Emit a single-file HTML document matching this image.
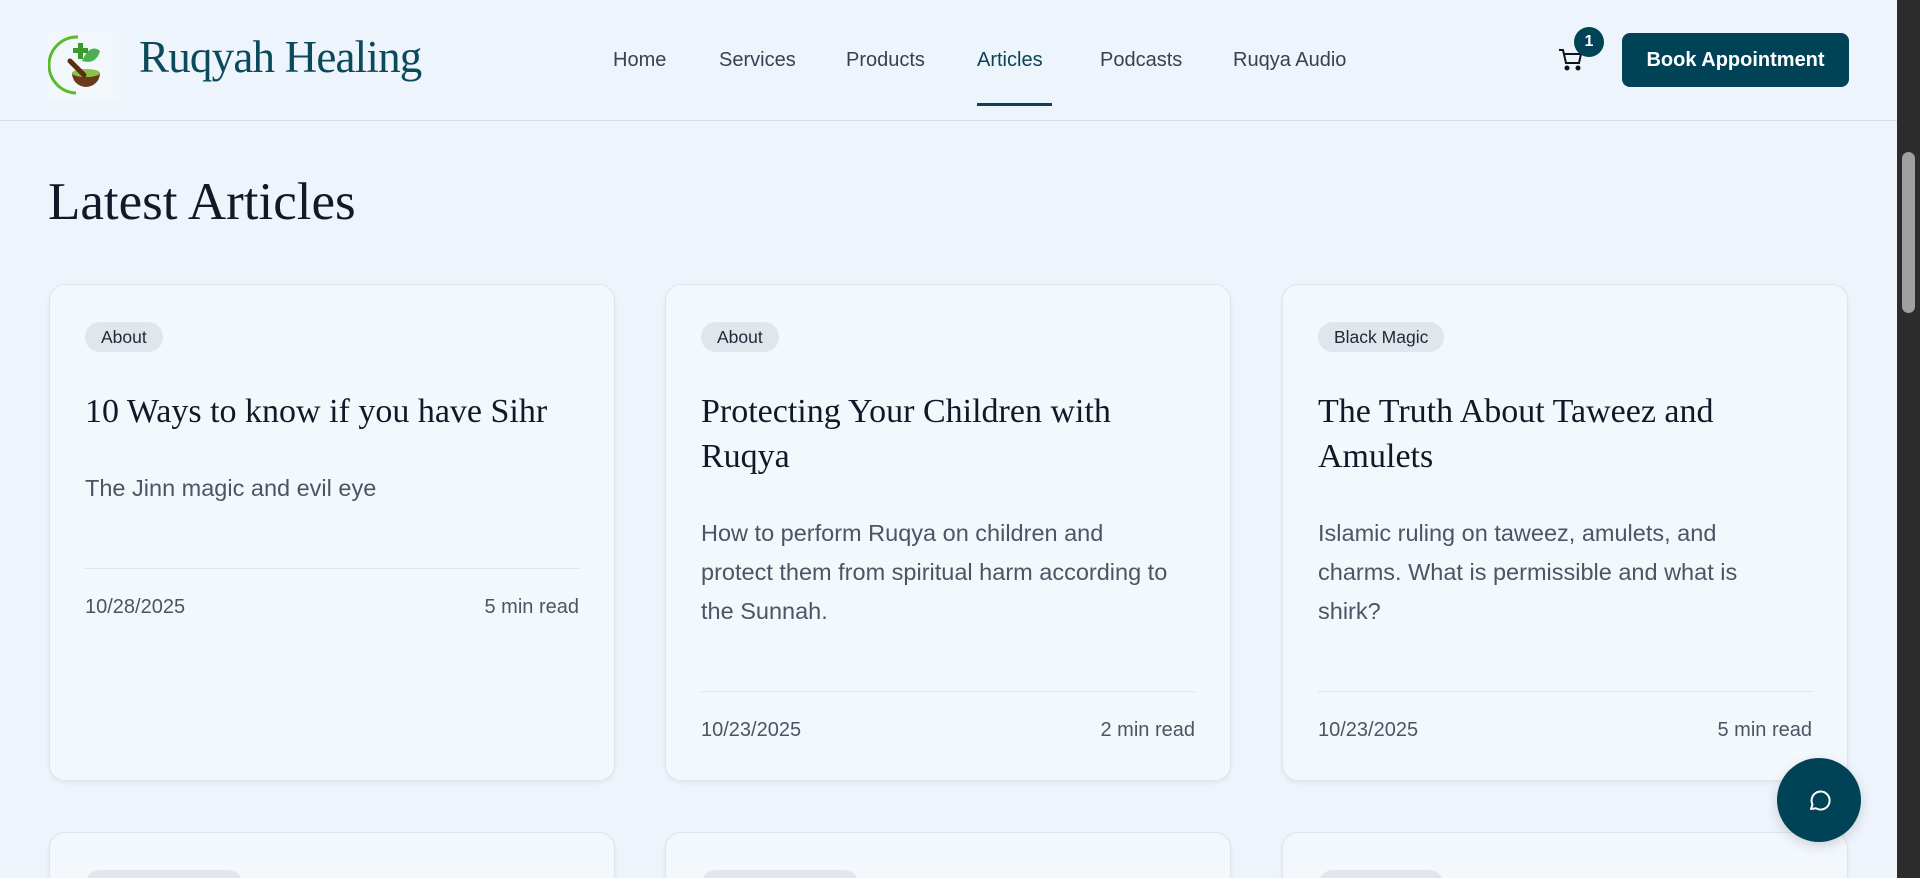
<!DOCTYPE html>
<html><head><meta charset="utf-8"><style>
*{box-sizing:border-box;margin:0;padding:0}
html,body{width:1920px;height:878px;overflow:hidden}
body{background:#eef4fb;font-family:"Liberation Sans",sans-serif;position:relative}
.hdr{position:absolute;left:0;top:0;width:1897px;height:121px;border-bottom:1.5px solid #d6dce6;background:#eef4fb}
.logo{position:absolute;left:48px;top:31px;width:71px;height:71px;background:#f2f7fb}
.brand{position:absolute;left:139px;top:31px;font-family:"Liberation Serif",serif;font-size:45px;color:#0b4a5a;letter-spacing:-0.8px}
.nav a{position:absolute;top:49px;font-size:20px;color:#374151;text-decoration:none}
.nav a.act{color:#0b4255}
.ul{position:absolute;left:977px;top:103px;width:75px;height:3px;background:#0b4255}
.btn{position:absolute;left:1622px;top:33px;width:227px;height:54px;background:#004357;border-radius:8px;color:#fff;font-size:20px;font-weight:bold;text-align:center;line-height:54px}
.badge{position:absolute;left:1574px;top:27px;width:30px;height:30px;border-radius:50%;background:#004357;color:#fff;font-size:16px;font-weight:bold;text-align:center;line-height:30px}
h1{position:absolute;left:48px;top:172px;font-family:"Liberation Serif",serif;font-weight:normal;font-size:53px;color:#111827}
.card{position:absolute;width:566px;background:#f3f8fd;border:1px solid #e0e5ec;border-radius:16px;box-shadow:0 2px 4px rgba(0,0,0,.06)}
.pill{position:absolute;left:35px;top:37px;height:30px;padding:0 16px;border-radius:15px;background:#e1e6ec;font-size:17.5px;line-height:30px;color:#1f2937}
.t{position:absolute;left:35px;font-family:"Liberation Serif",serif;font-size:34px;line-height:45px;color:#111827;width:500px}
.d{position:absolute;left:35px;width:495px;font-size:23.5px;line-height:39px;color:#4b5563}
.hr{position:absolute;left:35px;right:35px;height:1px;background:#dfe4ea}
.m{position:absolute;left:35px;right:35px;font-size:20px;color:#4b5563}
.m span{float:right}
.sb{position:absolute;right:0;top:0;width:23px;height:878px;background:#2c2c2c}
.th{position:absolute;left:5px;top:152px;width:13px;height:161px;border-radius:7px;background:#a0a0a0}
.chat{position:absolute;left:1777px;top:758px;width:84px;height:84px;border-radius:50%;background:#004357;box-shadow:0 4px 12px rgba(0,0,0,.15)}
</style></head><body>
<div class="hdr">
<div class="logo"><svg width="71" height="71" viewBox="0 0 71 71"><path d="M30 6 A28 28 0 0 0 28 62" fill="none" stroke="#5cb82e" stroke-width="3"/><path d="M24 42 h28 a14 14 0 0 1 -28 0z" fill="#6b3a1a"/><ellipse cx="38" cy="42" rx="14" ry="4" fill="#8bc34a"/><path d="M34 30 q8 -18 18 -10 q-4 14 -18 10z" fill="#4caf50"/><rect x="30" y="12" width="5" height="16" fill="#3a9a2a"/><rect x="25" y="17" width="15" height="5" fill="#3a9a2a"/><path d="M22 30 L36 44" stroke="#5a2e12" stroke-width="5" stroke-linecap="round"/></svg></div>
<div class="brand">Ruqyah Healing</div>
<div class="nav"><a style="left:613px">Home</a><a style="left:719px">Services</a><a style="left:846px">Products</a><a class="act" style="left:977px">Articles</a><a style="left:1100px">Podcasts</a><a style="left:1233px">Ruqya Audio</a></div>
<div class="ul"></div>
<svg style="position:absolute;left:1558px;top:48px" width="26" height="24" viewBox="0 0 26 24" fill="none" stroke="#111" stroke-width="2"><path d="M1 2h4l3 13h13l2-9H7"/><circle cx="9" cy="20" r="1.5" fill="#111"/><circle cx="20" cy="20" r="1.5" fill="#111"/></svg>
<div class="badge">1</div>
<div class="btn">Book Appointment</div>
</div>
<h1>Latest Articles</h1>
<div class="card" style="left:49px;top:284px;height:497px">
<div class="pill">About</div>
<div class="t" style="top:104px">10 Ways to know if you have Sihr</div>
<div class="d" style="top:184px">The Jinn magic and evil eye</div>
<div class="hr" style="top:283px"></div>
<div class="m" style="top:311px">10/28/2025<span>5 min read</span></div>
</div>
<div class="card" style="left:665px;top:284px;height:497px">
<div class="pill">About</div>
<div class="t" style="top:104px">Protecting Your Children with Ruqya</div>
<div class="d" style="top:229px">How to perform Ruqya on children and<br>protect them from spiritual harm according to<br>the Sunnah.</div>
<div class="hr" style="top:406px"></div>
<div class="m" style="top:434px">10/23/2025<span>2 min read</span></div>
</div>
<div class="card" style="left:1282px;top:284px;height:497px">
<div class="pill">Black Magic</div>
<div class="t" style="top:104px">The Truth About Taweez and Amulets</div>
<div class="d" style="top:229px">Islamic ruling on taweez, amulets, and<br>charms. What is permissible and what is<br>shirk?</div>
<div class="hr" style="top:406px"></div>
<div class="m" style="top:434px">10/23/2025<span>5 min read</span></div>
</div>
<div class="card" style="left:49px;top:832px;height:200px"><div class="pill">Jinn Possession</div></div>
<div class="card" style="left:665px;top:832px;height:200px"><div class="pill">Jinn Possession</div></div>
<div class="card" style="left:1282px;top:832px;height:200px"><div class="pill">Black Magic</div></div>
<div class="chat"><svg style="position:absolute;left:30px;top:30px" width="24" height="24" viewBox="0 0 24 24" fill="none" stroke="#fff" stroke-width="2" stroke-linejoin="round"><path d="M4 21l1.5-4.5A9 9 0 1 1 9 20.3z"/></svg></div>
<div class="sb"><div class="th"></div></div>
</body></html>
